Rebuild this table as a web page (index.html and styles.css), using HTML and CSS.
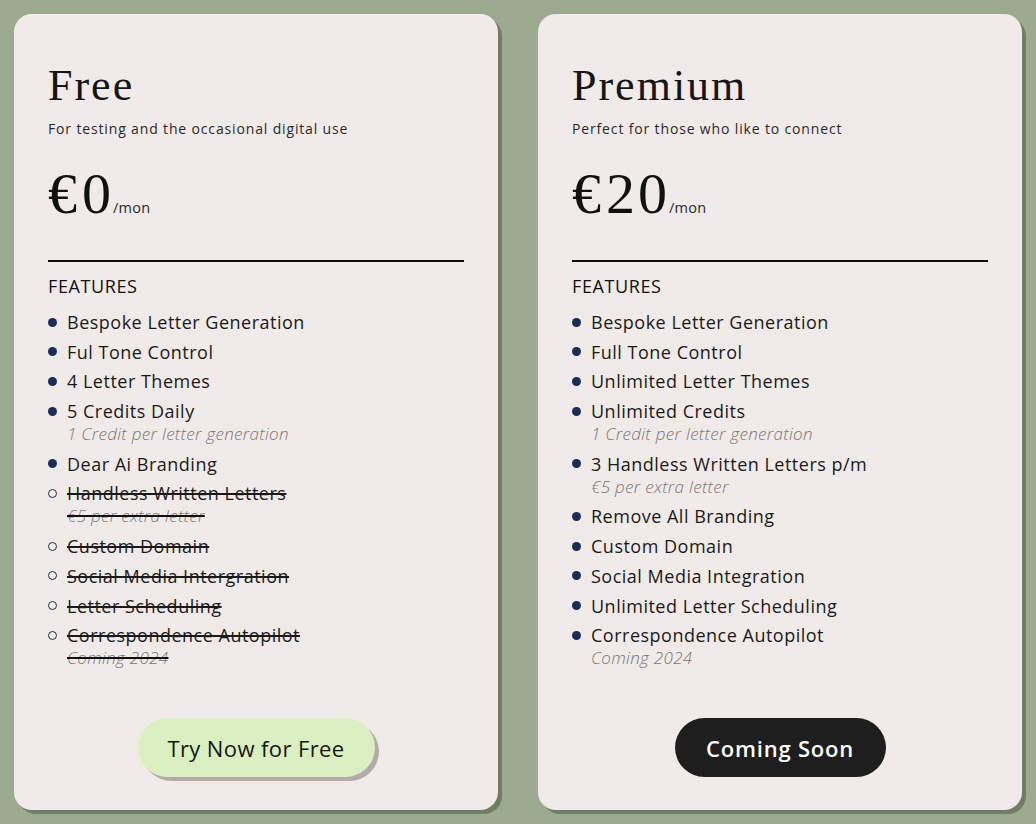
FILE: index.html
```html
<!DOCTYPE html>
<html lang="en">
<head>
<meta charset="utf-8">
<title>Pricing</title>
<link rel="stylesheet" href="styles.css">
</head>
<body>
<main class="plans">
  <section class="card">
    <h2 class="title">Free</h2>
    <p class="tagline">For testing and the occasional digital use</p>
    <div class="price"><span class="amount">€0</span><span class="per">/mon</span></div>
    <hr class="rule">
    <h3 class="features-head">FEATURES</h3>
    <ul class="features">
      <li class="on">Bespoke Letter Generation</li>
      <li class="on">Ful Tone Control</li>
      <li class="on">4 Letter Themes</li>
      <li class="on">5 Credits Daily<span class="note">1 Credit per letter generation</span></li>
      <li class="on">Dear Ai Branding</li>
      <li class="off"><s>Handless Written Letters</s><span class="note"><s>€5 per extra letter</s></span></li>
      <li class="off"><s>Custom Domain</s></li>
      <li class="off"><s>Social Media Intergration</s></li>
      <li class="off"><s>Letter Scheduling</s></li>
      <li class="off"><s>Correspondence Autopilot</s><span class="note"><s>Coming 2024</s></span></li>
    </ul>
    <div class="action"><button class="btn btn-try">Try Now for Free</button></div>
  </section>
  <section class="card">
    <h2 class="title">Premium</h2>
    <p class="tagline">Perfect for those who like to connect</p>
    <div class="price"><span class="amount">€20</span><span class="per">/mon</span></div>
    <hr class="rule">
    <h3 class="features-head">FEATURES</h3>
    <ul class="features">
      <li class="on">Bespoke Letter Generation</li>
      <li class="on">Full Tone Control</li>
      <li class="on">Unlimited Letter Themes</li>
      <li class="on">Unlimited Credits<span class="note">1 Credit per letter generation</span></li>
      <li class="on">3 Handless Written Letters p/m<span class="note">€5 per extra letter</span></li>
      <li class="on">Remove All Branding</li>
      <li class="on">Custom Domain</li>
      <li class="on">Social Media Integration</li>
      <li class="on">Unlimited Letter Scheduling</li>
      <li class="on">Correspondence Autopilot<span class="note">Coming 2024</span></li>
    </ul>
    <div class="action"><button class="btn btn-soon">Coming Soon</button></div>
  </section>
</main>
</body>
</html>
```
FILE: styles.css
```css
* { box-sizing: border-box; }
html, body { margin: 0; height: 100%; }
body {
  background: #9cab90;
  font-family: "Open Sans", "Liberation Sans", sans-serif;
  color: #1a1a1a;
}
.plans {
  display: flex;
  gap: 40px;
  padding: 14px;
  height: 824px;
}
.card {
  width: 484px;
  height: 796px;
  background: #f0ebe8;
  border-radius: 18px;
  box-shadow: 4px 4px 0 #6f7e66;
  padding: 46px 34px 33px 34px;
  display: flex;
  flex-direction: column;
}
.title {
  margin: 0;
  font-family: "Liberation Serif", serif;
  font-weight: 400;
  font-size: 44px;
  line-height: 52px;
  letter-spacing: 2px;
  color: #151515;
}
.tagline {
  margin: 7px 0 0;
  font-size: 14px;
  line-height: 20px;
  letter-spacing: 0.85px;
  color: #2a2a2a;
}
.price {
  margin-top: 23px;
  display: flex;
  align-items: baseline;
}
.amount {
  font-family: "Liberation Serif", serif;
  font-size: 58px;
  line-height: 64px;
  color: #111;
  letter-spacing: 3px;
}
.amount::first-letter { letter-spacing: 5px; }
.per {
  font-size: 14.5px;
  color: #2a2a2a;
  margin-left: -1px;
  letter-spacing: 0.3px;
}
.rule {
  margin: 34px 0 0;
  border: 0;
  height: 2px;
  background: #111;
}
.features-head {
  margin: 12px 0 0;
  font-size: 18px;
  font-weight: 400;
  line-height: 24px;
  letter-spacing: 0.6px;
  color: #111;
}
.features {
  list-style: none;
  margin: 13px 0 0;
  padding: 0;
}
.features li {
  position: relative;
  padding-left: 19px;
  font-size: 18px;
  line-height: 22px;
  margin-bottom: 7.7px;
  letter-spacing: 0.5px;
  color: #1a1a1a;
}
.features li::before {
  content: "";
  position: absolute;
  left: 0;
  top: 6.5px;
  width: 9px;
  height: 9px;
  border-radius: 50%;
  box-sizing: border-box;
}
.features li.on::before { background: #1b2d57; }
.features li.off::before { border: 1.5px solid #1b2d57; }
.features s { text-decoration-thickness: 2px; color: #1a1a1a; }
.note {
  display: block;
  font-style: italic;
  font-size: 17px;
  line-height: 23px;
  color: #7b7675;
  letter-spacing: 0.3px;
  font-weight: 300;
}
.note s { color: #7b7675; text-decoration-thickness: 1.5px; text-decoration-color: #111; }
.action {
  margin-top: auto;
  display: flex;
  justify-content: center;
}
.btn {
  height: 59px;
  border: 0;
  border-radius: 30px;
  font-family: "Open Sans", "Liberation Sans", sans-serif;
  font-size: 22px;
  cursor: pointer;
}
.btn-try {
  width: 237px;
  background: #daf0c1;
  color: #161616;
  letter-spacing: 0.4px;
  box-shadow: 4px 4px 0 #b2abaa;
}
.btn-soon {
  width: 211px;
  background: #1e1e1e;
  color: #fff;
  font-weight: 600;
  letter-spacing: 0.8px;
}
```
